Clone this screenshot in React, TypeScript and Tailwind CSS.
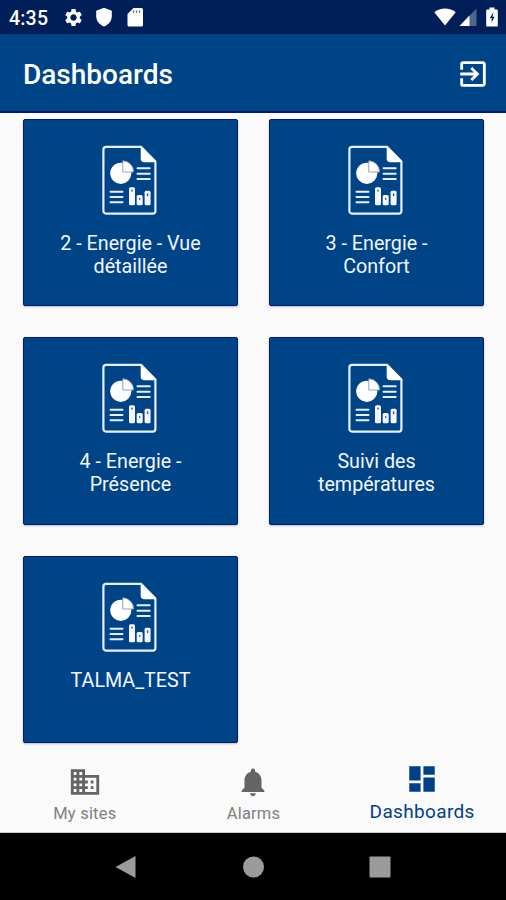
import type { ReactNode } from "react";
import {
  MdSettings,
  MdExitToApp,
  MdBusiness,
  MdNotifications,
  MdDashboard,
} from "react-icons/md";

function StatusBar() {
  return (
    <div className="flex h-[34px] shrink-0 items-center bg-[#001e57] pl-[9px] pr-[8px] text-white">
      <span className="w-[54px] pt-[3px] text-[19.500px] font-medium leading-[20px] tracking-[0.2px]">4:35</span>
      <MdSettings className="h-[21px] w-[21px]" />
      <svg className="ml-[12px] h-[20px] w-[16px]" viewBox="0 0 16 20">
        <path fill="#fff" d="M8 .8 15.800 3.800V9c0 5.200-3.300 8.800-7.800 10.500C3.500 17.800.2 14.200.2 9V3.800z" />
      </svg>
      <svg className="ml-[15px] h-[20px] w-[17px]" viewBox="0 0 17 20">
        <path fill="#fff" d="M6.500 1H14.500a1.500 1.500 0 0 1 1.500 1.500V18a1.500 1.500 0 0 1-1.500 1.500H2A1.500 1.500 0 0 1 .5 18V7z" />
        <path stroke="#64759a" strokeWidth="1.300" d="M6.500 3.500v2.500M9.500 3.500v2.500M12.500 3.500v2.500" />
      </svg>
      <svg className="ml-auto h-[20px] w-[22px]" viewBox="0 0 22 20">
        <path fill="#fff" d="M.3 5.200C6.500.2 15.500.2 21.700 5.200L11 18.500z" />
      </svg>
      <svg className="ml-[3px] h-[20px] w-[18px]" viewBox="0 0 18 20">
        <path fill="#50658c" d="M17.500 1.500V19H.5z" />
        <path fill="#fff" d="M10.500 8.500V19H.5z" />
      </svg>
      <svg className="ml-[9px] h-[20px] w-[12px]" viewBox="0 0 12 20">
        <path fill="#fff" d="M3.500.5h5v2H11a.8.8 0 0 1 .8.8v15.400a.8.8 0 0 1-.8.8H1a.8.8 0 0 1-.8-.8V3.300a.8.8 0 0 1 .8-.8h2.500z" />
        <path fill="#001e57" d="M7.500 5 3.800 11h1.900v4.500L8.500 9.800H6.500z" />
      </svg>
    </div>
  );
}

function ReportIcon() {
  return (
    <svg className="mr-[2px] h-[70px] w-[55px]" viewBox="0 0 55 70" fill="none">
      <path stroke="#e9effa" strokeWidth="2.200" strokeLinejoin="round" d="M39 1.800H4a2.600 2.600 0 0 0-2.600 2.600V66a2.600 2.600 0 0 0 2.600 2.600h46.800a2.600 2.600 0 0 0 2.600-2.600V16.500z" />
      <path fill="#fff" d="M38.700 1.500V13.500a3.800 3.800 0 0 0 3.800 3.800H54V16z" />
      <circle cx="18.800" cy="28.300" r="10.600" fill="#fff" />
      <path fill="#fff" stroke="#8797bd" strokeWidth=".9" d="M20.800 27V15.800A11 11 0 0 1 31.600 27z" />
      <path stroke="#e9effa" strokeWidth="2" strokeLinecap="round" d="M35.500 23.300h12.200M35.500 28.700h12.200M35.500 34h12.200M8.500 46.700h12M8.500 52h12M8.500 57.200h12" />
      <rect x="27" y="42.300" width="6" height="18" rx="1.500" fill="#f4f7ff" />
      <rect x="34.700" y="50" width="6" height="10.300" rx="1.500" fill="#f4f7ff" />
      <rect x="42.600" y="45.700" width="6" height="14.600" rx="1.500" fill="#f4f7ff" />
      <path stroke="#355b91" strokeWidth="1.500" strokeLinecap="round" d="M30 45.300v.6M37.700 53.700v.6M45.600 49v1.500" />
    </svg>
  );
}

function Card({ lines }: { lines: string[] }) {
  return (
    <div className="flex h-[187.200px] flex-col items-center rounded-[2px] border border-[#001b78] bg-[#004488] pt-[25px] shadow-[0_1px_2px_rgba(0,0,0,0.25)]">
      <ReportIcon />
      <div className="mt-[18px] text-center text-[19.700px] leading-[22.700px] text-[#f3f6ff]">
        {lines.map((line) => (
          <div key={line}>{line}</div>
        ))}
      </div>
    </div>
  );
}

function Tab({ icon, label, active }: { icon: ReactNode; label: string; active?: boolean }) {
  return active ? (
    <div className="flex flex-col items-center pl-[1px] pt-[19px] text-[#00408a]">
      {icon}
      <span className="mt-[5px] text-[19px] leading-[22px] tracking-[0.350px]">{label}</span>
    </div>
  ) : (
    <div className="flex flex-col items-center pl-[1px] pt-[22px] text-[#646464]">
      {icon}
      <span className="mt-[5px] text-[16.500px] leading-[20px] tracking-[0.200px] text-[#808080]">{label}</span>
    </div>
  );
}

const dashboards = [
  ["2 - Energie - Vue", "détaillée"],
  ["3 - Energie -", "Confort"],
  ["4 - Energie -", "Présence"],
  ["Suivi des", "températures"],
  ["TALMA_TEST"],
];

export default function App() {
  return (
    <div className="flex h-[900px] w-[506px] flex-col overflow-hidden bg-[#fafafa] font-['Roboto',sans-serif]">
      <StatusBar />
      <header className="flex h-[79px] shrink-0 items-center justify-between border-b-2 border-[#001878] bg-[#004488] pl-[23px] pr-[16px] text-white">
        <h1 className="pt-[5px] text-[28px] font-medium leading-none">Dashboards</h1>
        <MdExitToApp className="mt-[2px] h-[34px] w-[34px]" />
      </header>
      <main className="grid h-[630px] shrink-0 grid-cols-[215px_215px] content-start gap-x-[31px] gap-y-[31.200px] pl-[23px] pt-[6px]">
        {dashboards.map((lines) => (
          <Card key={lines[0]} lines={lines} />
        ))}
      </main>
      <nav className="grid h-[90px] shrink-0 grid-cols-3 border-b border-[#c8c8c8]">
        <Tab icon={<MdBusiness className="h-[34px] w-[34px]" />} label="My sites" />
        <Tab icon={<MdNotifications className="h-[34px] w-[34px]" />} label="Alarms" />
        <Tab icon={<MdDashboard className="h-[34px] w-[34px]" />} label="Dashboards" active />
      </nav>
      <div className="flex flex-1 items-center justify-center bg-black">
        <svg className="h-[26px] w-[280px]" viewBox="0 0 280 26" fill="#9b9b9b">
          <path d="M22.500 2v22L2.500 13z" />
          <circle cx="140.500" cy="13" r="10.500" />
          <rect x="256.500" y="2.500" width="21" height="21" rx="1" />
        </svg>
      </div>
    </div>
  );
}
